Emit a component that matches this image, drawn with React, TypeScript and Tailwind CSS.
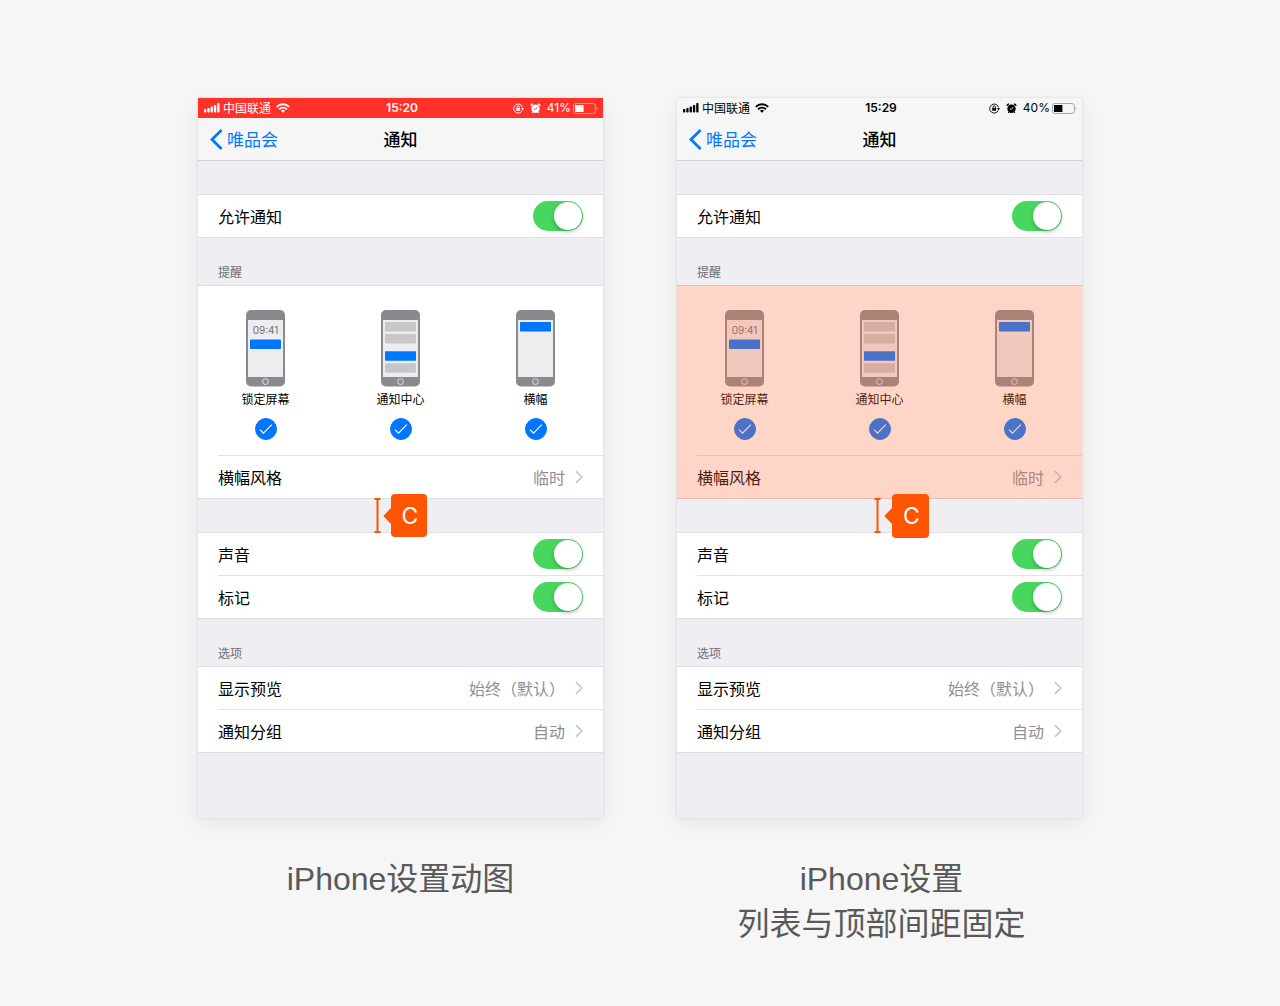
import { useId } from 'react';

type Marker = 'small' | 'large';

interface PhoneProps {
    time: string;
    battery: number;
    recording?: boolean;
    highlight?: boolean;
    marker: Marker;
}

const SignalIcon = () => (
    <svg width="16" height="10" viewBox="0 0 16 10" fill="currentColor" aria-hidden="true">
        <rect x="0" y="6" width="2.3" height="3.5" rx="0.8" />
        <rect x="3.3" y="5" width="2.3" height="4.5" rx="0.8" />
        <rect x="6.6" y="3.6" width="2.3" height="5.9" rx="0.8" />
        <rect x="9.9" y="2" width="2.3" height="7.5" rx="0.8" />
        <rect x="13.2" y="0" width="2.3" height="9.5" rx="0.8" />
    </svg>
);

const WifiIcon = () => (
    <svg width="14" height="10" viewBox="0 0 14 10" fill="none" stroke="currentColor" strokeWidth="1.9" aria-hidden="true">
        <path d="M0.8 3.8a8.8 8.8 0 0 1 12.4 0" />
        <path d="M3.1 6.2a5.6 5.6 0 0 1 7.8 0" />
        <path d="M7 9.8 4.9 7.7a3 3 0 0 1 4.2 0z" fill="currentColor" stroke="none" />
    </svg>
);

const RotationLockIcon = () => (
    <svg width="11" height="11" viewBox="0 0 11 11" fill="none" stroke="currentColor" aria-hidden="true">
        <path d="M9.3 7.4A4.5 4.5 0 1 1 9.5 4.2" strokeWidth="0.9" />
        <path d="M7.9 5H11L9.5 7.2z" fill="currentColor" stroke="none" />
        <rect x="3.2" y="4.9" width="3.9" height="2.9" rx="0.4" fill="currentColor" stroke="none" />
        <path d="M4 5V4a1.2 1.2 0 0 1 2.4 0v1" strokeWidth="0.8" />
    </svg>
);

const AlarmIcon = ({ hand }: { hand: string }) => (
    <svg width="11" height="11" viewBox="0 0 11 11" aria-hidden="true">
        <circle cx="5.5" cy="5.8" r="4.2" fill="currentColor" />
        <path d="M1.1 2.3 2.5 1.1M9.9 2.3 8.5 1.1" stroke="currentColor" strokeWidth="1.4" strokeLinecap="round" />
        <path d="M2.8 9 2.1 10M8.2 9 8.9 10" stroke="currentColor" />
        <path d="M7.2 4.2 5.5 6.2H3.9" stroke={hand} strokeWidth="0.9" fill="none" />
    </svg>
);

const BatteryIcon = ({ level, shell }: { level: number; shell: string }) => (
    <svg width="25" height="11" viewBox="0 0 25 11" aria-hidden="true">
        <rect x="0.5" y="0.5" width="21.8" height="10" rx="2.2" fill="none" stroke={shell} />
        <path d="M23.5 3.8c1.2.6 1.2 2.8 0 3.4z" fill={shell} />
        <rect x="2" y="2" width={(19 * level) / 100 + 0.8} height="7" fill="currentColor" />
    </svg>
);

const Chevron = () => (
    <svg width="8" height="14" viewBox="0 0 8 14" fill="none" stroke="#c7c7cc" strokeWidth="1.7" aria-hidden="true">
        <path d="M0.9 1.1 6.8 7 0.9 12.9" />
    </svg>
);

const Toggle = ({ label }: { label: string }) => (
    <label className="flex h-[42px] items-center justify-between pr-5">
        <span>{label}</span>
        <input type="checkbox" role="switch" defaultChecked className="peer sr-only" />
        <span className="flex h-[30px] w-[50px] items-center justify-start rounded-full bg-gray-200 p-px peer-checked:justify-end peer-checked:bg-[#47d75f]">
            <span className="size-7 rounded-full bg-white shadow-[0_2px_4px_rgba(0,0,0,0.25)]" />
        </span>
    </label>
);

const LinkRow = ({ label, value }: { label: string; value: string }) => (
    <a href="#" className="flex h-[42px] items-center pr-5">
        <span className="flex-1">{label}</span>
        <span className="mr-[10px] text-[#8e8e93]">{value}</span>
        <Chevron />
    </a>
);

const Divider = () => <div className="h-px bg-[#e3e3e6]" />;

const MiniPhone = ({ kind }: { kind: 'lock' | 'center' | 'banner' }) => (
    <svg width="39" height="77" viewBox="0 0 39 77" aria-hidden="true">
        <rect x="0" y="0" width="39" height="76.5" rx="5" fill="#8a8a8e" />
        <rect x="2" y="10" width="35" height="57" fill="#ededf0" />
        <circle cx="19.5" cy="71.6" r="2.9" fill="none" stroke="#ededf0" strokeWidth="0.9" />
        {kind === 'lock' && (
            <>
                <text x="19.5" y="23.5" textAnchor="middle" fontSize="10" fill="#6d6d72" className="font-['Inter',sans-serif]">09:41</text>
                <rect x="4" y="29.5" width="31" height="9.5" rx="0.8" fill="#0076ff" />
            </>
        )}
        {kind === 'center' && (
            <>
                <rect x="4" y="12" width="31" height="9.5" rx="0.8" fill="#c7c7ca" />
                <rect x="4" y="24" width="31" height="9.5" rx="0.8" fill="#c7c7ca" />
                <rect x="4" y="41.3" width="31" height="9.5" rx="0.8" fill="#0076ff" />
                <rect x="4" y="53.3" width="31" height="9.5" rx="0.8" fill="#c7c7ca" />
            </>
        )}
        {kind === 'banner' && <rect x="4" y="12" width="31" height="9.5" rx="0.8" fill="#0076ff" />}
    </svg>
);

const AlertOption = ({ kind, label }: { kind: 'lock' | 'center' | 'banner'; label: string }) => {
    const id = useId();
    return (
        <label htmlFor={id} className="flex flex-1 flex-col items-center pt-6 text-xs leading-4">
            <MiniPhone kind={kind} />
            <span className="mt-1">{label}</span>
            <input id={id} type="checkbox" defaultChecked className="peer sr-only" />
            <span className="mt-[11px] flex size-[22px] items-center justify-center rounded-full border border-gray-300 text-transparent peer-checked:border-[#0076ff] peer-checked:bg-[#0076ff] peer-checked:text-white">
                <svg width="14" height="12" viewBox="0 0 14 12" fill="none" stroke="currentColor" strokeWidth="1.1" aria-hidden="true">
                    <path d="M1 6.6 4.5 10.1 12.8 1.7" />
                </svg>
            </span>
        </label>
    );
};

const Measure = ({ marker }: { marker: Marker }) => (
    <div className={
        marker === 'small'
            ? 'relative z-10 flex h-[33px] items-center justify-center gap-[2px]'
            : 'relative z-10 flex h-[33px] items-center justify-center gap-[3px] pl-11'
    }>
        <svg width="7" height="35" viewBox="0 0 7 35" fill="none" stroke="#ff5400" strokeWidth="2" aria-hidden="true">
            <path d="M0.5 1h6M3.5 1v33M0.5 34h6" />
        </svg>
        <div className="flex items-center">
            <svg width="8" height="16" viewBox="0 0 8 16" fill="#ff5400" aria-hidden="true">
                <path d="M8 0 1 7.2q-.7.8 0 1.6L8 16z" />
            </svg>
            <span className={
                marker === 'small'
                    ? "flex h-[43px] w-9 items-center justify-center rounded bg-[#ff5400] pt-[2px] pl-[2px] font-['Inter',sans-serif] text-[23px] text-white"
                    : "flex h-11 w-[37px] items-center justify-center rounded bg-[#ff5400] pt-[2px] pl-[2px] font-['Inter',sans-serif] text-[23px] text-white"
            }>
                C
            </span>
        </div>
    </div>
);

const Phone = ({ time, battery, recording, highlight, marker }: PhoneProps) => (
    <section className="w-[405px] bg-[#eeeef3] font-['Noto_Sans_CJK_SC',sans-serif] text-base text-black shadow-[0_6px_20px_rgba(0,0,0,0.07),0_0_2px_rgba(0,0,0,0.12)]">
        <div className={recording
            ? 'grid h-5 grid-cols-3 items-center bg-[#ff3128] pr-[5px] pl-[6px] text-xs text-white'
            : 'grid h-5 grid-cols-3 items-center bg-[#f6f6f6] pr-[5px] pl-[6px] text-xs text-black'}>
            <div className="flex items-center">
                <SignalIcon />
                <span className="mr-[5px] ml-[3px]">中国联通</span>
                <WifiIcon />
            </div>
            <span className="pl-[2px] text-center font-['Inter',sans-serif] font-semibold">{time}</span>
            <div className="flex items-center justify-end">
                <RotationLockIcon />
                <span className="ml-[6px]"><AlarmIcon hand={recording ? '#ff3128' : '#f6f6f6'} /></span>
                <span className="mr-[2px] ml-[6px] font-['Inter',sans-serif]">{battery}%</span>
                <BatteryIcon level={battery} shell={recording ? '#ff9d98' : '#a5a5a8'} />
            </div>
        </div>
        <header className="grid h-[43px] grid-cols-3 items-center border-b border-[#d1d1d6] bg-[#f6f6f6] px-3 text-[17px]">
            <a href="#" className="flex items-center gap-1 text-[#007aff]">
                <svg width="13" height="21" viewBox="0 0 13 21" fill="none" stroke="currentColor" strokeWidth="2.8" aria-hidden="true">
                    <path d="M11.6 1 2 10.5 11.6 20" />
                </svg>
                唯品会
            </a>
            <h2 className="text-center font-medium">通知</h2>
        </header>
        <div className="mt-[33px] border-y border-[#dedee3] bg-white pl-5">
            <Toggle label="允许通知" />
        </div>
        <h3 className="flex h-[47px] items-end px-5 pb-1 text-xs leading-[18px] text-[#6d6d72]">提醒</h3>
        <div className="relative border-y border-[#dedee3] bg-white">
            <div className="flex h-[169px]">
                <AlertOption kind="lock" label="锁定屏幕" />
                <AlertOption kind="center" label="通知中心" />
                <AlertOption kind="banner" label="横幅" />
            </div>
            <div className="pl-5">
                <Divider />
                <LinkRow label="横幅风格" value="临时" />
            </div>
            {highlight && <div className="pointer-events-none absolute inset-x-0 -inset-y-px bg-[#ff6f41]/29" />}
        </div>
        <Measure marker={marker} />
        <div className="border-y border-[#dedee3] bg-white pl-5">
            <Toggle label="声音" />
            <Divider />
            <Toggle label="标记" />
        </div>
        <h3 className="flex h-[47px] items-end px-5 pb-1 text-xs leading-[18px] text-[#6d6d72]">选项</h3>
        <div className="mb-[65px] border-y border-[#dedee3] bg-white pl-5">
            <LinkRow label="显示预览" value="始终（默认）" />
            <Divider />
            <LinkRow label="通知分组" value="自动" />
        </div>
    </section>
);

export default function App() {
    return (
        <main className="flex min-h-screen flex-wrap items-start justify-center gap-[74px] bg-[#f6f6f6] py-[98px] font-['Liberation_Sans','Noto_Sans_CJK_SC',sans-serif]">
            <figure className="flex flex-col items-center">
                <Phone time="15:20" battery={41} recording marker="small" />
                <figcaption className="mt-[39px] text-center text-[32px] leading-[45px] text-[#595959]">iPhone设置动图</figcaption>
            </figure>
            <figure className="flex flex-col items-center">
                <Phone time="15:29" battery={40} highlight marker="large" />
                <figcaption className="mt-[39px] pl-1 text-center text-[32px] leading-[45px] text-[#595959]">
                    iPhone设置<br />列表与顶部间距固定
                </figcaption>
            </figure>
        </main>
    );
}
